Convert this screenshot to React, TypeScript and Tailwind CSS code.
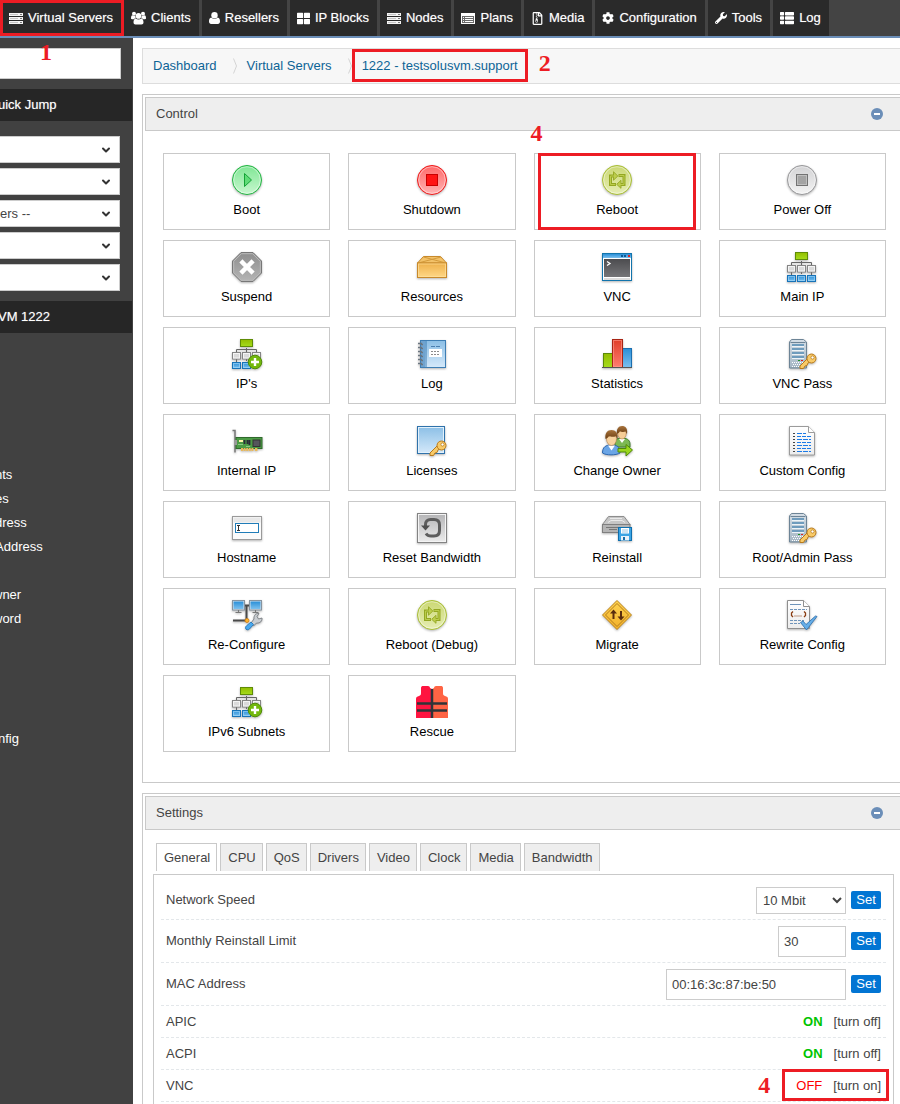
import clsx from "clsx";
import { ChevronDown } from "lucide-react";
import { useState } from "react";
import type { ReactNode } from "react";
import { FaCog, FaRegFileArchive, FaThLarge, FaThList, FaWrench } from "react-icons/fa";

/* ---------- small nav icons ---------- */

function ServersGlyph() {
  return (
    <svg width="14" height="11" viewBox="0 0 14 11" shapeRendering="crispEdges">
      {[0, 4, 8].map((y) => (
        <g key={y}>
          <rect x="0" y={y} width="14" height="3" fill="#f4f4f4" />
          <rect x="1" y={y + 1} width="8" height="1" fill="#c4c4c4" />
          <rect x="11" y={y + 1} width="2" height="1" fill="#777" />
        </g>
      ))}
    </svg>
  );
}

function PlansGlyph() {
  return (
    <svg width="14" height="11" viewBox="0 0 14 11" shapeRendering="crispEdges">
      <rect width="14" height="11" fill="#fff" />
      <rect x="1" y="3" width="12" height="7" fill="#6a6a6a" />
      {[4, 6, 8].map((y) => (
        <g key={y} fill="#fff">
          <rect x="2" y={y} width="1" height="1" />
          <rect x="4" y={y} width="8" height="1" />
        </g>
      ))}
    </svg>
  );
}

function UserGlyph() {
  return (
    <svg width="11" height="12" viewBox="0 0 11 12" fill="#fff">
      <circle cx="5.500" cy="3.200" r="3.200" />
      <path d="M2.300 5.600C.6 6 0 7.500 0 9.600 0 11.200.9 12 2.100 12h6.800c1.200 0 2.100-.8 2.100-2.400 0-2.100-.6-3.600-2.300-4-.8.9-1.900 1.400-3.200 1.400s-2.400-.5-3.200-1.400z" />
    </svg>
  );
}

function UsersGlyph() {
  return (
    <svg width="15" height="14" viewBox="0 0 15 14" fill="#fff">
      <circle cx="3" cy="2.800" r="2" />
      <circle cx="12" cy="2.800" r="2" />
      <path d="M0 7.500C0 5.500.5 4.300 1.500 4.300c.8.700 2 .9 2.900.5-.2 1 0 1.800.5 2.500-.9.1-1.600.5-2.200 1H1.200C.4 8.300 0 8 0 7.500z" />
      <path d="M15 7.500c0-2-.5-3.200-1.500-3.200-.8.700-2 .9-2.900.5.2 1 0 1.800-.5 2.500.9.1 1.600.5 2.200 1h1.500c.8 0 1.200-.3 1.200-.8z" />
      <circle cx="7.500" cy="4.900" r="2.800" />
      <path d="M4.700 7.400c-1.500.3-2.200 1.700-2.200 3.900 0 1.500.8 2.200 2 2.200h6c1.200 0 2-.7 2-2.200 0-2.200-.7-3.600-2.200-3.900-.7.7-1.700 1.100-2.800 1.100s-2.100-.4-2.800-1.100z" />
    </svg>
  );
}

/* ---------- 32px control icons ---------- */

function Gradient({ id, from, to }: { id: string; from: string; to: string }) {
  return (
    <linearGradient id={id} x1="0" y1="0" x2="0" y2="1">
      <stop offset="0" stopColor={from} />
      <stop offset="1" stopColor={to} />
    </linearGradient>
  );
}

function IconDefs() {
  return (
    <svg className="absolute size-0" aria-hidden>
      <defs>
        <Gradient id="gGreen" from="#7fe694" to="#c8f7cf" />
        <Gradient id="gRed" from="#ff6a6a" to="#ffb3b3" />
        <Gradient id="gLime" from="#cbd873" to="#e6edb4" />
        <Gradient id="gSilver" from="#d2d2d4" to="#f3f3f3" />
        <Gradient id="gPad" from="#b4b4b6" to="#ececec" />
        <Gradient id="gGrey" from="#8d8d8d" to="#b5b5b5" />
        <Gradient id="gBox" from="#eeb04a" to="#ffd887" />
        <Gradient id="gBlue" from="#2a8fd8" to="#7cc0ee" />
        <Gradient id="gSky" from="#8bbfe6" to="#d5e9fa" />
        <Gradient id="gTerm" from="#4c4c4f" to="#757578" />
        <Gradient id="gLeaf" from="#93bd00" to="#a5dc1c" />
        <Gradient id="gBar" from="#e03d28" to="#ff7d70" />
        <Gradient id="gPaper" from="#ffffff" to="#ececec" />
        <Gradient id="gGold" from="#ffd452" to="#f2b02a" />
        <Gradient id="gRack" from="#d5dee6" to="#a5b6c4" />
        <Gradient id="gHair" from="#a9743c" to="#6b3d12" />
      </defs>
    </svg>
  );
}

function Icon({ children }: { children: ReactNode }) {
  return (
    <svg
      width="32"
      height="32"
      viewBox="0 0 32 32"
      className="drop-shadow-[0_1px_1px_rgba(0,0,0,0.3)]"
      aria-hidden
    >
      {children}
    </svg>
  );
}

function Disc({ fill, stroke, children }: { fill: string; stroke: string; children: ReactNode }) {
  return (
    <Icon>
      <circle cx="16" cy="16" r="14.5" fill={fill} stroke={stroke} />
      <circle cx="16" cy="16" r="13.3" fill="none" stroke="#fff" strokeOpacity="0.45" />
      {children}
    </Icon>
  );
}

const BootIcon = () => (
  <Disc fill="url(#gGreen)" stroke="#22b542">
    <path d="M13.5 9.5v13l7-6.5z" fill="#5fdc77" stroke="#14a336" />
  </Disc>
);

const ShutdownIcon = () => (
  <Disc fill="url(#gRed)" stroke="#f01a1a">
    <rect x="10.5" y="10.5" width="11" height="11" fill="#ff1414" stroke="#c80000" />
  </Disc>
);

const RebootIcon = () => (
  <Disc fill="url(#gLime)" stroke="#a9bf35">
    <g fill="none" stroke="#94a722" strokeWidth="3">
      <path d="M15 20.5H9.500V12H13" />
      <path d="M17.500 11.500h5.500v9h-3" />
    </g>
    <g fill="#bccd4c" stroke="#94a722" strokeWidth="0.900">
      <path d="M12.500 7.800l4.300 4.200-4.300 4.200z" />
      <path d="M20 16.300v8l-4.300-4z" />
    </g>
    <g fill="none" stroke="#bccd4c">
      <path d="M14.200 20.500H9.500V12H14" />
      <path d="M18.300 11.500h4.700v9h-4" />
    </g>
  </Disc>
);

const PowerOffIcon = () => (
  <Disc fill="url(#gSilver)" stroke="#98989a">
    <rect x="10.5" y="10.5" width="11" height="11" fill="#a3a3a3" stroke="#727272" />
    <rect x="11.5" y="11.5" width="9" height="9" fill="none" stroke="#bebebe" />
  </Disc>
);

const SuspendIcon = () => (
  <Icon>
    <path d="M10 1.5h12l8.500 8.500v12L22 30.500H10L1.500 22V10z" fill="url(#gGrey)" stroke="#777" />
    <path
      d="M10.400 2.700h11.200l7.700 7.700v11.200l-7.700 7.700H10.400l-7.700-7.700V10.400z"
      fill="none"
      stroke="#bbb"
    />
    <path d="M11.500 11.500l9 9M20.500 11.500l-9 9" stroke="#fff" strokeWidth="4.500" strokeLinecap="square" />
  </Icon>
);

const ResourcesIcon = () => (
  <Icon>
    <path d="M1.500 12L7.500 5.500h17l6 6.500z" fill="#f3c269" stroke="#c88a2c" />
    <path d="M4 11.500L25 6M28 11.500L7.500 6" stroke="#d49b3c" fill="none" />
    <rect x="1.500" y="12" width="29" height="14.500" fill="url(#gBox)" stroke="#c88a2c" />
    <rect x="2.500" y="13" width="27" height="12.500" fill="none" stroke="#ffdf9c" strokeOpacity="0.700" />
  </Icon>
);

const VncIcon = () => (
  <Icon>
    <rect x="1.500" y="2.500" width="29" height="27" fill="#fff" stroke="#1274ac" />
    <rect x="2" y="3" width="28" height="4" fill="url(#gBlue)" />
    <rect x="20" y="4" width="2" height="2" fill="#0e5a94" />
    <rect x="23" y="4" width="2" height="2" fill="#0e5a94" />
    <rect x="27" y="4" width="2" height="2" fill="#e02020" />
    <rect x="3" y="8" width="26" height="18" fill="url(#gTerm)" />
    <path d="M6 10.500l3 2-3 2" stroke="#fff" strokeWidth="1.300" fill="none" />
    <rect x="3" y="27" width="26" height="2" fill="#dcdcdc" />
  </Icon>
);

function NetworkTree({ last = true }: { last?: boolean }) {
  return (
    <>
      <path d="M15.500 10v13M5.500 14v-2.500h20V14M5.500 20v4M25.500 20v4" stroke="#666" fill="none" />
      <rect x="9.500" y="1.500" width="12" height="7" fill="url(#gLeaf)" stroke="#5f8c06" />
      {[1.5, 11.5, 21.5].map((x) => (
        <g key={x}>
          <rect x={x} y="14.500" width="8" height="6.500" fill="#dadada" stroke="#858585" />
          <rect x={x + 1} y="15.500" width="6" height="4.500" fill="none" stroke="#f4f4f4" />
          {(last || x < 20) && (
            <>
              <rect x={x} y="24.500" width="8" height="6" fill="url(#gBlue)" stroke="#1773b8" />
              <rect x={x + 1} y="25.500" width="6" height="4" fill="none" stroke="#a9dbfa" strokeOpacity="0.600" />
            </>
          )}
        </g>
      ))}
    </>
  );
}

const MainIpIcon = () => (
  <Icon>
    <NetworkTree />
  </Icon>
);

const AddIpIcon = () => (
  <Icon>
    <NetworkTree last={false} />
    <circle cx="24" cy="24" r="6.800" fill="#72b80c" stroke="#4f8a06" />
    <path d="M24 20v8M20 24h8" stroke="#fff" strokeWidth="2.400" />
  </Icon>
);

const LogIcon = () => (
  <Icon>
    <rect x="4.500" y="2.500" width="25" height="27" fill="url(#gSky)" stroke="#3e7eb4" />
    <rect x="5" y="3" width="4" height="26" fill="#6fa3cf" />
    <path d="M10 3v26" stroke="#3e7eb4" />
    {[4, 8, 12, 16, 20, 24].map((y) => (
      <path key={y} d={`M2 ${y + 1.5}h4M5 ${y + 2.5}h2`} stroke="#6b7680" strokeWidth="1.400" />
    ))}
    <path d="M15 8.500h4M20 8.500h4" stroke="#4a7fb0" />
    <rect x="13" y="11" width="13" height="8" fill="#fff" />
    <path d="M15 13.500h9M15 16.500h9" stroke="#8c8c8c" strokeDasharray="2 1" />
  </Icon>
);

const StatisticsIcon = () => (
  <Icon>
    <rect x="2.500" y="15.500" width="9" height="14" fill="url(#gLeaf)" stroke="#5c8a08" />
    <rect x="21.500" y="10.500" width="9" height="19" fill="url(#gBlue)" stroke="#1a6fb0" />
    <rect x="11.500" y="1.500" width="10" height="28" fill="url(#gBar)" stroke="#a82414" />
    <rect x="12.500" y="2.500" width="8" height="26" fill="none" stroke="#ff9c90" strokeOpacity="0.600" />
    <path d="M1 29.500h30" stroke="#555" />
  </Icon>
);

const KeyShape = () => (
  <g fill="#f8ca68" stroke="#b87a1c">
    <path d="M21.500 20.500L14 28v2.500h3.500l1.500-2.500 2-.5 1-2.500 3-2z" />
    <circle cx="25.500" cy="20.500" r="4.500" />
    <circle cx="26.500" cy="19.500" r="1.600" fill="#fff" strokeWidth="0.800" />
  </g>
);

const ServerKeyIcon = () => (
  <Icon>
    <path d="M3.500 30V4L5.500 1.500h12L20.500 4v26z" fill="url(#gRack)" stroke="#6d8496" />
    <path d="M4.500 4.500h15" stroke="#6d8496" />
    {[6, 10, 14, 18].map((y) => (
      <g key={y}>
        <rect x="6" y={y} width="12" height="2" fill="#6f9cbd" />
        <rect x="6" y={y + 2} width="12" height="1" fill="#eef3f7" />
      </g>
    ))}
    <rect x="12" y="22" width="2" height="1" fill="#1f8f1f" />
    <rect x="15" y="22" width="2" height="1" fill="#e02020" />
    <path d="M6 24.500h11M7 26.500h9M6 28.500h8" stroke="#fff" strokeDasharray="1 1" />
    <KeyShape />
  </Icon>
);

const InternalIpIcon = () => (
  <Icon>
    <path d="M1.500 5.500h2.500v22" stroke="#777" strokeWidth="1.500" fill="none" />
    <rect x="5" y="12.500" width="26" height="11" fill="#4c9b45" stroke="#2f6a2c" />
    <rect x="3" y="15" width="3" height="5" fill="#999" />
    <rect x="8" y="15" width="4" height="2" fill="#fff3a8" />
    <path d="M13.500 15v4M16.500 15v4M18.500 15v5" stroke="#2b2b38" strokeWidth="1.800" />
    <rect x="22" y="15" width="7" height="6.500" fill="#55555c" stroke="#333" />
    <path d="M7 19.500h5M15 21.500h4" stroke="#8bc985" />
    <path d="M10 24.500h13M24 24.500h3" stroke="#e9b95a" strokeWidth="3" strokeDasharray="2 0.600" />
  </Icon>
);

const LicensesIcon = () => (
  <Icon>
    <rect x="1.500" y="1.500" width="27" height="27" fill="url(#gSky)" stroke="#2f72ab" />
    <rect x="2.500" y="2.500" width="25" height="25" fill="none" stroke="#e2f1fc" />
    <KeyShape />
  </Icon>
);

const ChangeOwnerIcon = () => (
  <Icon>
    <path d="M14 19c0-5 3-6 7-6s8 1.500 8 6v3H14z" fill="#7cb854" stroke="#3f7d2a" />
    <path d="M18 14l3 4 3-4z" fill="#fff" />
    <ellipse cx="21" cy="8.500" rx="4.200" ry="5.500" fill="#f6cd96" stroke="#b9814a" strokeWidth="0.600" />
    <path d="M16 9c-.8-5 1.500-8 5-8s6 2.500 5 8c-.8-1-1.200-2.500-1.200-2.500-2 .8-4.800.4-6 0 0 0-1 1.500-2.800 2.500z" fill="url(#gHair)" />
    <path d="M1.500 28c0-6 3-8 9-8s8.500 2 8.500 8c-4 2.500-14 2.500-17.500 0z" fill="#6aa5e6" stroke="#2c66ae" />
    <path d="M7 20.500l3.500 5 3.500-5z" fill="#fff" />
    <ellipse cx="10.500" cy="14" rx="5" ry="6.500" fill="#f8d29e" stroke="#b9814a" strokeWidth="0.600" />
    <path d="M4.500 14c-.8-6 2-9 6-9s6.800 3 6 9c-1-1-1.500-2.800-1.500-2.800-2.500.9-5.500.5-7 0 0 0-1.200 1.800-3.500 2.800z" fill="url(#gHair)" />
    <path d="M17 23.500h8v-4l6.500 5.500-6.500 6v-4h-8z" fill="#9ad61e" stroke="#4f8a06" />
  </Icon>
);

const CustomConfigIcon = () => (
  <Icon>
    <path d="M3.500 1.500h19l6 6v22.500h-25z" fill="url(#gPaper)" stroke="#9b9b9b" />
    <path d="M22.500 1.500v6h6" fill="#fff" stroke="#9b9b9b" />
    {[8.5, 11.5, 14.5, 17.5, 20.5, 23.5, 26.5].map((y, i) => (
      <g key={y}>
        <path d={`M7 ${y}h2`} stroke="#444" />
        <path d={`M11 ${y}h${i === 0 ? 9 : 14}`} stroke="#1b7be8" strokeDasharray={i % 2 ? "4 1" : "5 1"} />
      </g>
    ))}
  </Icon>
);

const HostnameIcon = () => (
  <Icon>
    <rect x="1.500" y="4.500" width="29" height="23" fill="#fafafa" stroke="#9a9a9a" />
    <rect x="2.500" y="5.500" width="27" height="5" fill="#e8e8e8" />
    <rect x="4.500" y="11.500" width="23" height="9" fill="#fff" stroke="#1f7cb8" />
    <path d="M6 13.500h3M7.500 13.500v5M6 18.500h3" stroke="#333" fill="none" />
  </Icon>
);

const ResetBandwidthIcon = () => (
  <Icon>
    <rect x="1.500" y="1.500" width="29" height="29" fill="url(#gPad)" stroke="#838383" />
    <rect x="2.500" y="2.500" width="27" height="27" fill="none" stroke="#f4f4f4" />
    <path
      d="M9.500 15v-2.500c0-3 2-5 5-5h3.500c3.500 0 5.500 2 5.500 5.500v5.500c0 3.500-2 5.500-5.500 5.500h-3c-2.500 0-4-1-5-2.500"
      fill="none"
      stroke="#5d5d5d"
      strokeWidth="3"
    />
    <path d="M5 13.500h9L9.500 18.500z" fill="#4f4f4f" />
  </Icon>
);

const ReinstallIcon = () => (
  <Icon>
    <path d="M1.500 12.500L7.500 4.500h15.500l6 8z" fill="#c6c6c6" stroke="#8d8d8d" />
    <path d="M9 6.500h12M7 10.500l3-2h11l3 2" stroke="#e9e9e9" fill="none" />
    <rect x="1.500" y="12.500" width="27.500" height="8" fill="#b4b4b4" stroke="#7f7f7f" />
    <path d="M5 15.500h17M8 17.500h8" stroke="#777" />
    <rect x="17.500" y="15.500" width="13" height="13" fill="#3aa4e4" stroke="#0f6fae" />
    <rect x="20" y="16" width="8" height="5.500" fill="#fff" />
    <path d="M21 18h6M21 20h6" stroke="#9cc8e4" />
    <rect x="20" y="24" width="8" height="4.500" fill="#e9f3fa" />
    <rect x="22" y="25" width="2" height="3" fill="#1a6fa8" />
  </Icon>
);

const ReconfigureIcon = () => (
  <Icon>
    <path d="M13 6.500h5M15.500 6.500v14M2 21.500h14" stroke="#4a4a4a" strokeWidth="2" fill="none" />
    {[1.5, 18.5].map((x) => (
      <g key={x}>
        <rect x={x} y="1.500" width="12" height="9.500" fill="#d9e2ea" stroke="#8694a0" />
        <rect x={x + 1} y="2.500" width="10" height="7.500" fill="url(#gBlue)" />
        <path d={`M${x + 6} 11v2M${x + 3} 13.500h6`} stroke="#777" />
      </g>
    ))}
    <circle cx="16" cy="21.500" r="2" fill="#ffb52e" stroke="#d07b10" strokeWidth="0.800" />
    <path
      d="M20 24l3-4c-.5-3 1.500-6 5-5.500l-2 3 1.500 2.500 3.500-1c.5 3-2 5.500-5.500 5l-3 3z"
      fill="#c9cdd1"
      stroke="#6e7479"
      strokeWidth="0.800"
    />
    <path
      d="M20 23l2.500 2.500-4 4.500c-1.500 1.500-4 1-4-1.200 0-1 .5-1.500 1-2z"
      fill="#4aa9ee"
      stroke="#1f6fae"
      strokeWidth="0.800"
    />
  </Icon>
);

const MigrateIcon = () => (
  <Icon>
    <path d="M16 1.500L30.500 16 16 30.500 1.500 16z" fill="url(#gGold)" stroke="#bd8418" strokeLinejoin="round" />
    <path d="M16 4.500L27.500 16 16 27.500 4.500 16z" fill="none" stroke="#b57d1c" />
    <path d="M12.500 20v-7M20 12v7" stroke="#5a2d0e" strokeWidth="2" />
    <path d="M9 14.500l3.500-4 3.500 4zM16.500 17.500l3.500 4 3.500-4z" fill="#5a2d0e" />
  </Icon>
);

const RewriteConfigIcon = () => (
  <Icon>
    <path d="M1.500 1.500h16l6 6v22h-22z" fill="url(#gPaper)" stroke="#8f8f8f" />
    <path d="M17.500 1.500v6h6" fill="#fff" stroke="#8f8f8f" />
    <path d="M4 5.500h11" stroke="#6f94ba" />
    <path d="M4 10.500h17M4 21.500h14M4 24.500h10" stroke="#6f94ba" strokeDasharray="3 1" />
    <path d="M7 12.500L5.500 14v2.500L7 18M18 12.500l1.500 1.500v2.500L18 18" stroke="#8a3d12" strokeWidth="1.300" fill="none" />
    <path d="M8.500 17h8" stroke="#8a3d12" strokeDasharray="1 1" />
    <path
      d="M14.500 23.500l2.500-1.500 3 3.500L29.500 17l1.500.5L20.500 31z"
      fill="#66aee8"
      stroke="#2a6cab"
      strokeWidth="0.800"
    />
  </Icon>
);

const RescueIcon = () => (
  <svg width="32" height="32" viewBox="0 0 32 32" aria-hidden>
    <path d="M16 3V32H0V13c0-2 1-2.500 3-3 1.500-.5 2-1 2-3V2c0-1.500 1-2 2-2h5c1 0 2 .8 2 2z" fill="#ff1440" />
    <path d="M16 3V32h16V13c0-2-1-2.500-3-3-1.500-.5-2-1-2-3V2c0-1.500-1-2-2-2h-5c-1 0-2 .8-2 2z" fill="#ff6444" />
    <path d="M1 17.500h30M1 24.500h30" stroke="#303438" strokeWidth="2.500" />
    <path d="M16 3v29" stroke="#303438" strokeWidth="2.500" />
  </svg>
);

/* ---------- data ---------- */

const navItems = [
  { label: "Virtual Servers", icon: <ServersGlyph />, callout: "1" },
  { label: "Clients", icon: <UsersGlyph /> },
  { label: "Resellers", icon: <UserGlyph /> },
  { label: "IP Blocks", icon: <FaThLarge size={13} /> },
  { label: "Nodes", icon: <ServersGlyph /> },
  { label: "Plans", icon: <PlansGlyph /> },
  { label: "Media", icon: <FaRegFileArchive size={13} /> },
  { label: "Configuration", icon: <FaCog size={12} /> },
  { label: "Tools", icon: <FaWrench size={12} /> },
  { label: "Log", icon: <FaThList size={14} /> },
];

const controls = [
  { label: "Boot", icon: <BootIcon /> },
  { label: "Shutdown", icon: <ShutdownIcon /> },
  { label: "Reboot", icon: <RebootIcon />, callout: "4" },
  { label: "Power Off", icon: <PowerOffIcon /> },
  { label: "Suspend", icon: <SuspendIcon /> },
  { label: "Resources", icon: <ResourcesIcon /> },
  { label: "VNC", icon: <VncIcon /> },
  { label: "Main IP", icon: <MainIpIcon /> },
  { label: "IP's", icon: <AddIpIcon /> },
  { label: "Log", icon: <LogIcon /> },
  { label: "Statistics", icon: <StatisticsIcon /> },
  { label: "VNC Pass", icon: <ServerKeyIcon /> },
  { label: "Internal IP", icon: <InternalIpIcon /> },
  { label: "Licenses", icon: <LicensesIcon /> },
  { label: "Change Owner", icon: <ChangeOwnerIcon /> },
  { label: "Custom Config", icon: <CustomConfigIcon /> },
  { label: "Hostname", icon: <HostnameIcon /> },
  { label: "Reset Bandwidth", icon: <ResetBandwidthIcon /> },
  { label: "Reinstall", icon: <ReinstallIcon /> },
  { label: "Root/Admin Pass", icon: <ServerKeyIcon /> },
  { label: "Re-Configure", icon: <ReconfigureIcon /> },
  { label: "Reboot (Debug)", icon: <RebootIcon /> },
  { label: "Migrate", icon: <MigrateIcon /> },
  { label: "Rewrite Config", icon: <RewriteConfigIcon /> },
  { label: "IPv6 Subnets", icon: <AddIpIcon /> },
  { label: "Rescue", icon: <RescueIcon /> },
];

const tabs = ["General", "CPU", "QoS", "Drivers", "Video", "Clock", "Media", "Bandwidth"];

const jumpLists = ["", "", "ers --", "", ""];

/* ---------- pieces ---------- */

function Callout({ children, className }: { children: ReactNode; className: string }) {
  return (
    <span
      className={clsx(
        "pointer-events-none absolute z-10 font-['Liberation_Serif',serif] text-2xl leading-6 font-bold text-[#ed1c24] text-shadow-none",
        className,
      )}
    >
      {children}
    </span>
  );
}

function Frame({ className }: { className: string }) {
  return <span className={clsx("pointer-events-none absolute border-3 border-[#ed1c24]", className)} />;
}

function Separator() {
  return (
    <svg width="4" height="16" viewBox="0 0 4 16" fill="none" stroke="#d4d4d4" aria-hidden>
      <path d="M0.500 0.500L3.500 8 0.500 15.500" />
    </svg>
  );
}

function Panel({ title, className, children }: { title: string; className?: string; children: ReactNode }) {
  return (
    <section className={clsx("border border-[#c9c9c9] bg-white p-0.5", className)}>
      <header className="flex h-[34px] items-center justify-between border border-[#c9c9c9] bg-[#eee] pr-[21px] pl-2.5">
        <h2>{title}</h2>
        <button
          aria-label={`Collapse ${title}`}
          className="flex size-3 items-center justify-center rounded-full bg-[#6b8eb8]"
        >
          <span className="h-0.5 w-1.5 bg-white" />
        </button>
      </header>
      {children}
    </section>
  );
}

function SetButton() {
  return <button className="h-[18px] w-[30px] rounded-xs bg-[#0275d3] leading-4 text-white">Set</button>;
}

function SettingRow({ label, htmlFor, children }: { label: string; htmlFor?: string; children: ReactNode }) {
  return (
    <div className="flex min-h-8 items-center justify-between border-b border-dashed border-[#e3e7ea] px-[5px]">
      {htmlFor ? <label htmlFor={htmlFor}>{label}</label> : <span>{label}</span>}
      <div className="relative flex items-center gap-[5px]">{children}</div>
    </div>
  );
}

function Toggle({ on }: { on: boolean }) {
  return (
    <>
      <span className={clsx("mr-1.5", on ? "font-bold text-[#00c400]" : "text-[#f00]")}>{on ? "ON" : "OFF"}</span>
      <button>{on ? "[turn off]" : "[turn on]"}</button>
    </>
  );
}

function Sidebar() {
  return (
    <aside className="w-[133px] shrink-0 overflow-hidden bg-[#414141] text-white">
      <input
        aria-label="Search"
        className="mt-2.5 block h-[31px] w-[121px] border border-l-0 border-[#ccc] bg-white px-1 text-[#444]"
      />
      <h3 className="mt-2.5 mr-px h-8 bg-[#262626] leading-8 text-shadow-[0_0_1px_rgba(255,255,255,0.5)]">
        <span className="-ml-0.5">uick Jump</span>
      </h3>
      <div className="mt-[15px] flex w-[120px] flex-col gap-[5px]">
        {jumpLists.map((text, i) => (
          <div key={i} className="relative">
            <select
              aria-label={`Jump list ${i + 1}`}
              className="block h-[27px] w-full appearance-none border border-l-0 border-[#ccc] bg-white text-[#444]"
            >
              <option>{text}</option>
            </select>
            <ChevronDown
              size={12}
              strokeWidth={4}
              className="pointer-events-none absolute top-2 right-2 text-[#333]"
            />
          </div>
        ))}
      </div>
      <h3 className="mt-2.5 mr-px h-8 bg-[#262626] leading-8 text-shadow-[0_0_1px_rgba(255,255,255,0.5)]">
        <span className="-ml-0.5">VM 1222</span>
      </h3>
      <nav className="mt-[130px] -ml-[5px] flex flex-col leading-6">
        <a href="#clients">nts</a>
        <a href="#services">es</a>
        <a href="#address">dress</a>
        <a href="#new-address">Address</a>
      </nav>
      <nav className="mt-6 -ml-[7px] flex flex-col leading-6">
        <a href="#owner">wner</a>
        <a href="#password">word</a>
      </nav>
      <nav className="mt-24 -ml-0.5 flex flex-col leading-6">
        <a href="#config">nfig</a>
      </nav>
    </aside>
  );
}

export default function App() {
  const [tab, setTab] = useState("General");
  const [speed, setSpeed] = useState("10 Mbit");
  const [limit, setLimit] = useState("30");
  const [mac, setMac] = useState("00:16:3c:87:be:50");

  return (
    <div className="flex min-h-screen flex-col overflow-hidden bg-white font-['Liberation_Sans',Arial,sans-serif] text-[13px] leading-5 text-[#444]">
      <IconDefs />
      <nav className="flex h-[38px] gap-[3px] border-b-2 border-[#6b8eb8] bg-[#444] pl-0.5">
        {navItems.map(({ label, icon, callout }) => (
          <a
            key={label}
            href="#nav"
            className="relative flex items-center gap-[5px] bg-[#2a2a2a] pr-2 pl-[7px] whitespace-nowrap text-white text-shadow-[0_0_1px_rgba(255,255,255,0.5)]"
          >
            {icon}
            {label}
            {callout && (
              <>
                <Frame className="top-0 -right-[3px] bottom-0 -left-0.5" />
                <Callout className="top-10 left-[38px]">{callout}</Callout>
              </>
            )}
          </a>
        ))}
      </nav>

      <div className="flex flex-1">
        <Sidebar />

        <main className="-mr-2 ml-[9px] flex min-w-0 flex-1 flex-col pt-2.5">
          <nav className="flex h-9 items-center gap-2.5 border border-[#ddd] bg-[#f7f7f7] pl-2.5 text-[#0d6496]">
            <a href="#dashboard" className="mr-1.5">Dashboard</a>
            <Separator />
            <a href="#servers" className="mr-1.5">Virtual Servers</a>
            <Separator />
            <a href="#server" className="relative">
              1222 - testsolusvm.support
              <Frame className="-inset-x-2.5 -top-[7px] -bottom-1.5" />
              <Callout className="-top-[5px] -right-[33px]">2</Callout>
            </a>
          </nav>

          <Panel title="Control" className="mt-2.5">
            <div className="grid grid-cols-4 gap-x-[18px] gap-y-2.5 pt-[22px] pr-[19px] pb-7 pl-[18px]">
              {controls.map(({ label, icon, callout }) => (
                <button
                  key={label}
                  className="relative flex flex-col items-center border border-[#c9c9c9] pt-2.5 pb-[9px] text-black"
                >
                  {icon}
                  <span className="mt-1">{label}</span>
                  {callout && (
                    <>
                      <Frame className="-inset-y-px right-1 left-[3px]" />
                      <Callout className="-top-[33px] -left-1">{callout}</Callout>
                    </>
                  )}
                </button>
              ))}
            </div>
          </Panel>

          <Panel title="Settings" className="mt-2.5 flex flex-1 flex-col border-b-0 pb-0">
            <div role="tablist" className="mt-[13px] flex gap-[3px] pl-[11px]">
              {tabs.map((name) => (
                <button
                  key={name}
                  role="tab"
                  aria-selected={tab === name}
                  onClick={() => setTab(name)}
                  className={clsx(
                    "h-7 border border-b-0 border-[#c9c9c9] pr-1.5 pl-[7px]",
                    tab === name ? "bg-white" : "bg-[#eee]",
                  )}
                >
                  {name}
                </button>
              ))}
            </div>
            <div className="mt-[3px] mr-[11px] ml-2 flex-1 border border-b-0 border-[#c9c9c9] px-[7px] pt-[5px]">
              <SettingRow label="Network Speed" htmlFor="speed">
                <select
                  id="speed"
                  value={speed}
                  onChange={(e) => setSpeed(e.target.value)}
                  className="mt-[7px] mb-[5px] h-[27px] w-[90px] border border-[#ccc] bg-white pl-0.5"
                >
                  <option>10 Mbit</option>
                </select>
                <SetButton />
              </SettingRow>
              <SettingRow label="Monthly Reinstall Limit" htmlFor="limit">
                <input
                  id="limit"
                  value={limit}
                  onChange={(e) => setLimit(e.target.value)}
                  className="mt-1.5 mb-[5px] h-[31px] w-[68px] border border-[#ccc] bg-white px-[5px]"
                />
                <SetButton />
              </SettingRow>
              <SettingRow label="MAC Address" htmlFor="mac">
                <input
                  id="mac"
                  value={mac}
                  onChange={(e) => setMac(e.target.value)}
                  className="mt-1.5 mb-[5px] h-[31px] w-[180px] border border-[#ccc] bg-white px-[5px]"
                />
                <SetButton />
              </SettingRow>
              <SettingRow label="APIC">
                <Toggle on />
              </SettingRow>
              <SettingRow label="ACPI">
                <Toggle on />
              </SettingRow>
              <SettingRow label="VNC">
                <Toggle on={false} />
                <Frame className="-top-[7px] -right-2 -bottom-[5px] -left-3.5" />
                <Callout className="-top-[3px] -left-[38px]">4</Callout>
              </SettingRow>
            </div>
          </Panel>
        </main>
      </div>
    </div>
  );
}
